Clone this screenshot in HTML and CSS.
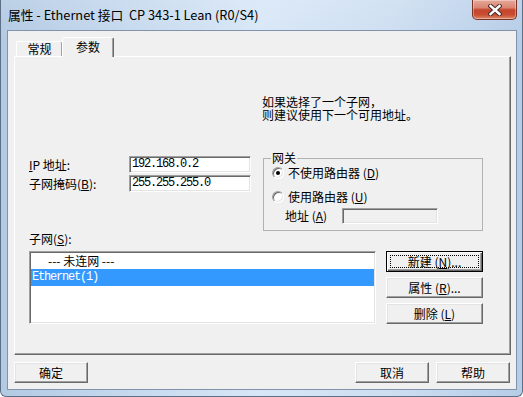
FILE: index.html
```html
<!DOCTYPE html>
<html lang="zh">
<head>
<meta charset="utf-8">
<title>属性 - Ethernet 接口</title>
<link rel="stylesheet" href="styles.css">
</head>
<body>
<div class="window">
  <div class="titlebar">
    <span class="title">属性 - Ethernet 接口&nbsp; CP 343-1 Lean (R0/S4)</span>
    <div class="close">
      <svg width="14" height="12" viewBox="0 0 14 12">
        <path d="M2.5 2 L11.5 10 M11.5 2 L2.5 10" stroke="#4a2a28" stroke-width="4.4" stroke-linecap="square" fill="none"/>
        <path d="M2.5 2 L11.5 10 M11.5 2 L2.5 10" stroke="#ffffff" stroke-width="2.4" stroke-linecap="square" fill="none"/>
      </svg>
    </div>
  </div>
  <div class="client">
    <div class="tabs">
      <div class="tab">常规</div>
      <div class="tab active">参数</div>
    </div>
    <div class="panel">
      <div class="hint"><div>如果选择了一个子网，</div><div>则建议使用下一个可用地址。</div></div>
      <div class="middle">
        <div class="fields">
          <div class="field"><span class="label"><u>I</u>P 地址:</span><div class="input mono">192.168.0.2</div></div>
          <div class="field"><span class="label">子网掩码(<u>B</u>):</span><div class="input mono">255.255.255.0</div></div>
        </div>
        <fieldset class="group">
          <legend>网关</legend>
          <div class="radio-row"><span class="radio checked"></span>不使用路由器 (<u>D</u>)</div>
          <div class="radio-row second"><span class="radio"></span>使用路由器 (<u>U</u>)</div>
          <div class="addr-row"><span class="addr-label">地址 (<u>A</u>)</span><div class="input disabled"></div></div>
        </fieldset>
      </div>
      <div class="subnet-label">子网(<u>S</u>):</div>
      <div class="subnet-row">
        <div class="list">
          <div class="item">--- 未连网 ---</div>
          <div class="item selected mono">Ethernet(1)</div>
        </div>
        <div class="side">
          <button class="btn default"><span class="focus">新建 (<u>N</u>)...</span></button>
          <button class="btn">属性 (<u>R</u>)...</button>
          <button class="btn">删除 (<u>L</u>)</button>
        </div>
      </div>
    </div>
    <div class="bottom">
      <button class="btn wide">确定</button>
      <span class="spacer"></span>
      <button class="btn wide">取消</button>
      <button class="btn wide last">帮助</button>
    </div>
  </div>
</div>
</body>
</html>
```

FILE: styles.css
```css
* { box-sizing: border-box; }
html, body { margin: 0; padding: 0; }
body {
  width: 523px;
  height: 397px;
  overflow: hidden;
  font-family: "Noto Sans CJK SC", "Noto Sans", sans-serif;
  font-size: 12px;
  line-height: 12px;
  color: #000;
}
u { text-decoration: underline; text-underline-offset: 1px; }

.window {
  width: 523px;
  height: 397px;
  display: flex;
  flex-direction: column;
  padding: 0 5px 6px 6px;
  border: 1px solid #5d6f86;
  border-top: none;
  border-radius: 0 0 6px 6px;
  background:
    linear-gradient(to bottom, rgba(255,255,255,0.12), rgba(255,255,255,0) 40px),
    linear-gradient(to right, #b3cae3 0%, #c6d9ee 25%, #d8e7f7 50%, #cddef1 75%, #b6cde7 100%);
}

.titlebar {
  height: 30px;
  display: flex;
  align-items: flex-start;
}
.title {
  flex: 1;
  margin-left: 1px;
  line-height: 30px;
  font-size: 12.75px;
  white-space: nowrap;
}
.close {
  width: 45px;
  height: 20px;
  border: 1px solid #7a3326;
  border-top: none;
  border-radius: 0 0 5px 5px;
  background: linear-gradient(to bottom, #e6a899 0%, #d98672 40%, #c5452d 52%, #c84d31 78%, #de8a6a 100%);
  box-shadow: inset 0 0 0 1px rgba(255,255,255,0.35);
  display: flex;
  align-items: center;
  justify-content: center;
}

.client {
  flex: 1;
  background: #f0f0f0;
  border: 1px solid #8193aa;
  padding: 6px 5px 0 6px;
  display: flex;
  flex-direction: column;
}

.tabs {
  display: flex;
  align-items: flex-end;
  height: 20px;
  margin-bottom: -1px;
  position: relative;
  z-index: 1;
}
.tab {
  height: 15px;
  margin-bottom: 1px;
  margin-left: 2px;
  width: 47px;
  background: #f0f0f0;
  border: 1px solid;
  border-color: #fff #696969 transparent #fff;
  border-bottom: none;
  border-radius: 2px 2px 0 0;
  box-shadow: inset -1px 0 0 #a0a0a0;
  text-align: center;
  line-height: 14px;
}
.tab.active {
  height: 20px;
  margin-bottom: 0;
  margin-left: -1px;
  width: 52px;
  line-height: 15px;
  padding-top: 1px;
}

.panel {
  height: 299px;
  background: #f0f0f0;
  border: 1px solid;
  border-color: #fff #696969 #696969 #fff;
  box-shadow: inset -1px -1px 0 #a0a0a0;
  padding: 38px 0 0 14px;
}

.hint {
  margin-left: 233px;
  line-height: 13px;
  white-space: nowrap;
}

.middle {
  display: flex;
  align-items: flex-start;
  margin-top: 31px;
}
.fields {
  width: 222px;
  padding-top: 4px;
}
.field {
  display: flex;
  align-items: center;
  height: 17px;
}
.field + .field { margin-top: 2px; }
.label { width: 100px; white-space: nowrap; }

.input {
  width: 122px;
  height: 17px;
  background: #fff;
  border: 1px solid;
  border-color: #a0a0a0 #fff #fff #a0a0a0;
  box-shadow: inset 1px 1px 0 #696969, inset -1px -1px 0 #e3e3e3;
  padding-left: 2px;
  line-height: 15px;
}
.mono {
  font-family: "Liberation Mono", "DejaVu Sans Mono", monospace;
  font-size: 12px;
  letter-spacing: -1.2px;
}
.input.disabled {
  width: 96px;
  height: 16px;
  background: #f0f0f0;
}

.group {
  margin: 0 0 0 12px;
  width: 220px;
  min-width: 0;
  padding: 0 0 6px 7px;
  border: 1px solid #b2b2b2;
}
.group legend {
  padding: 0 1px;
  line-height: 12px;
}
.radio-row {
  display: flex;
  align-items: center;
  height: 18px;
  padding-left: 1px;
  white-space: nowrap;
}
.radio-row.second { margin-top: 6px; }
.radio {
  width: 12px;
  height: 12px;
  margin-right: 4px;
  border-radius: 50%;
  background: #fff;
  border: 1px solid;
  border-color: #a0a0a0 #fff #fff #a0a0a0;
  box-shadow: inset 1px 1px 0 #696969, inset -1px -1px 0 #e3e3e3;
  display: flex;
  align-items: center;
  justify-content: center;
}
.radio.checked::after {
  content: "";
  width: 4px;
  height: 4px;
  border-radius: 50%;
  background: #000;
}
.addr-row {
  display: flex;
  align-items: center;
  height: 16px;
  margin-top: 2px;
  padding-left: 14px;
}
.addr-label { width: 57px; white-space: nowrap; }

.subnet-label {
  margin-top: 2px;
  line-height: 12px;
}
.subnet-row {
  display: flex;
  margin-top: 6px;
}
.list {
  width: 347px;
  height: 73px;
  background: #fff;
  border: 1px solid;
  border-color: #a0a0a0 #fff #fff #a0a0a0;
  box-shadow: inset 1px 1px 0 #696969, inset -1px -1px 0 #e3e3e3;
  padding: 1px 1px 0 1px;
}
.item {
  height: 16px;
  line-height: 16px;
  padding-left: 17px;
  white-space: nowrap;
}
.item.selected {
  height: 17px;
  line-height: 17px;
  padding-left: 1px;
  background: #3399ff;
  color: #fff;
}

.side {
  margin-left: 10px;
  width: 97px;
  display: flex;
  flex-direction: column;
  gap: 5px;
}

.btn {
  appearance: none;
  margin: 0;
  padding: 0;
  font: inherit;
  line-height: 12px;
  color: #000;
  height: 21px;
  width: 97px;
  background: #f0f0f0;
  border: 1px solid;
  border-color: #fff #696969 #696969 #fff;
  box-shadow: inset -1px -1px 0 #a0a0a0, inset 1px 1px 0 #e3e3e3;
  display: flex;
  align-items: center;
  justify-content: center;
  white-space: nowrap;
}
.btn.default {
  border: 1px solid #000;
  box-shadow: inset 1px 1px 0 #fff, inset -1px -1px 0 #696969, inset -2px -2px 0 #a0a0a0;
  padding: 3px;
}
.focus {
  flex: 1;
  align-self: stretch;
  display: flex;
  align-items: center;
  justify-content: center;
  outline: 1px dotted #000;
  outline-offset: -1px;
}

.bottom {
  display: flex;
  margin-top: 7px;
}
.btn.wide { width: 74px; }
.spacer { flex: 1; }
.btn.wide + .btn.wide { margin-left: 7px; }
.btn.last { margin-right: 1px; }
```
